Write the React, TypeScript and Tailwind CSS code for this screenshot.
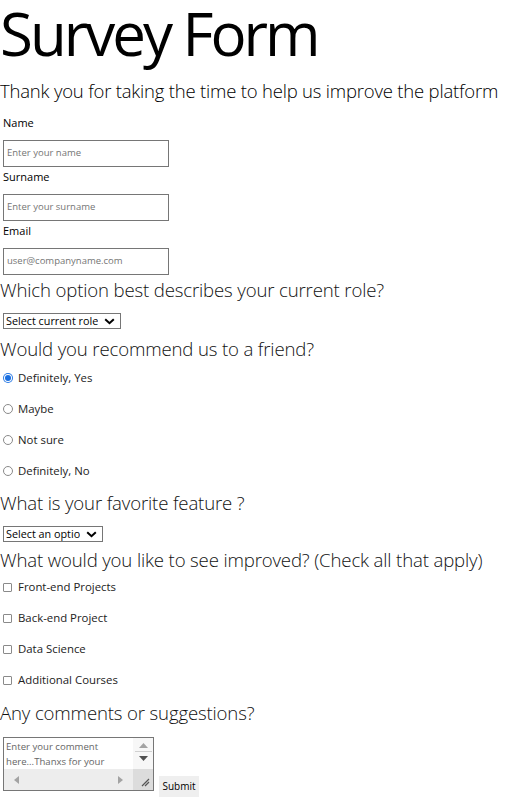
import React from "react";

function TextInput({ placeholder }: { placeholder: string }) {
  return (
    <div className="mt-[9px] w-[166px] h-[27px] border border-[#767676] bg-white flex items-center pl-[3px] text-[9.5px] text-[#757575]">
      {placeholder}
    </div>
  );
}

function Chevron() {
  return (
    <svg width="11" height="7" viewBox="0 0 11 7" className="shrink-0">
      <path d="M1.2 1.2 L5.5 5.2 L9.8 1.2" fill="none" stroke="#000" strokeWidth="2" />
    </svg>
  );
}

function Select({ text, width }: { text: string; width: string }) {
  return (
    <div className={`mt-[11px] h-[16px] border border-[#767676] bg-white flex items-center justify-between pl-[2px] pr-[5px] text-[10.8px] text-black ${width}`}>
      <span className="whitespace-nowrap overflow-hidden">{text}</span>
      <Chevron />
    </div>
  );
}

function Radio({ label, checked, first }: { label: string; checked?: boolean; first?: boolean }) {
  return (
    <div className={`${first ? "mt-[9px]" : "mt-[15px]"} h-[16px] flex items-center`}>
      {checked ? (
        <div className="w-[10px] h-[10px] rounded-full bg-[#2a7ae4] flex items-center justify-center ml-[3px]">
          <div className="w-[8px] h-[8px] rounded-full bg-white flex items-center justify-center">
            <div className="w-[6px] h-[6px] rounded-full bg-[#1a6fe0]" />
          </div>
        </div>
      ) : (
        <div className="w-[10px] h-[10px] rounded-full border border-[#8a8a8a] bg-white ml-[3px]" />
      )}
      <span className="ml-[5px] text-[11.4px] text-[#222]">{label}</span>
    </div>
  );
}

function Check({ label, first }: { label: string; first?: boolean }) {
  return (
    <div className={`${first ? "mt-[7px]" : "mt-[15px]"} h-[16px] flex items-center`}>
      <div className="w-[9px] h-[9px] rounded-[1px] border border-[#8a8a8a] bg-white ml-[3px]" />
      <span className="ml-[6px] text-[11.4px] text-[#222]">{label}</span>
    </div>
  );
}

function Question({ text, mt }: { text: string; mt: string }) {
  return (
    <div className={`${mt} h-[24px] leading-[24px] text-[18.6px] tracking-[-0.15px] font-light text-[#111] whitespace-nowrap`}>
      {text}
    </div>
  );
}

export default function App() {
  return (
    <div className="w-[513px] h-[797px] bg-white overflow-hidden text-black font-['Open_Sans',sans-serif]">
      <h1 className="-mt-[8px] text-[60px] leading-[82px] h-[82px] tracking-[-3px] whitespace-nowrap">Survey Form</h1>
      <p className="mt-[5px] text-[18.5px] tracking-[-0.2px] leading-[24px] h-[24px] font-light whitespace-nowrap">
        Thank you for taking the time to help us improve the platform
      </p>
      <div className="pl-[3px]">
        <div className="mt-[12px] h-[16px] leading-[16px] text-[11px]">Name</div>
        <TextInput placeholder="Enter your name" />
        <div className="mt-[2px] h-[16px] leading-[16px] text-[11px]">Surname</div>
        <TextInput placeholder="Enter your surname" />
        <div className="mt-[2px] h-[16px] leading-[16px] text-[11px]">Email</div>
        <TextInput placeholder="user@companyname.com" />
      </div>
      <Question mt="mt-[3px]" text="Which option best describes your current role?" />
      <div className="pl-[3px]">
        <Select text="Select current role" width="w-[118px]" />
      </div>
      <Question mt="mt-[8px]" text="Would you recommend us to a friend?" />
      <Radio first checked label="Definitely, Yes" />
      <Radio label="Maybe" />
      <Radio label="Not sure" />
      <Radio label="Definitely, No" />
      <Question mt="mt-[12px]" text="What is your favorite feature ?" />
      <div className="pl-[3px]">
        <Select text="Select an optio" width="w-[100px]" />
      </div>
      <Question mt="mt-[6px]" text="What would you like to see improved? (Check all that apply)" />
      <Check first label="Front-end Projects" />
      <Check label="Back-end Project" />
      <Check label="Data Science" />
      <Check label="Additional Courses" />
      <Question mt="mt-[13px]" text="Any comments or suggestions?" />
      <div className="mt-[12px] pl-[3px] flex items-start">
        <div className="w-[151px] h-[54px] border border-[#767676] bg-white flex">
          <div className="flex-1 flex flex-col">
            <div className="flex-1 pl-[2px] pt-[1px] text-[9.6px] leading-[15px] text-[#666] overflow-hidden">
              Enter your comment
              <br />
              here...Thanxs for your
            </div>
            <div className="h-[21px] bg-[#ededed] flex items-center justify-between px-[10px]">
              <svg width="5" height="8" viewBox="0 0 5 8"><path d="M5 0 L0 4 L5 8 Z" fill="#a3a3a3" /></svg>
              <svg width="5" height="8" viewBox="0 0 5 8"><path d="M0 0 L5 4 L0 8 Z" fill="#a3a3a3" /></svg>
            </div>
          </div>
          <div className="w-[20px] flex flex-col">
            <div className="flex-1 bg-[#f7f7f7] flex flex-col items-center pt-[5px]">
              <svg width="9" height="5" viewBox="0 0 9 5"><path d="M0 5 L4.5 0 L9 5 Z" fill="#a3a3a3" /></svg>
              <div className="mt-[3px] w-[17px] h-px bg-[#d0d0d0]" />
              <svg className="mt-[4px]" width="9" height="5" viewBox="0 0 9 5"><path d="M0 0 L4.5 5 L9 0 Z" fill="#505050" /></svg>
            </div>
            <div className="h-[21px] bg-[#dcdcdc] flex items-end justify-end p-[3px]">
              <svg width="9" height="9" viewBox="0 0 9 9">
                <path d="M1 8 L8 1 M4 8 L8 4" stroke="#555" strokeWidth="1.2" />
              </svg>
            </div>
          </div>
        </div>
        <div className="ml-[5px] mt-[39px] w-[40px] h-[21px] bg-[#efefef] flex items-center justify-center text-[10px] text-black">
          Submit
        </div>
      </div>
    </div>
  );
}
